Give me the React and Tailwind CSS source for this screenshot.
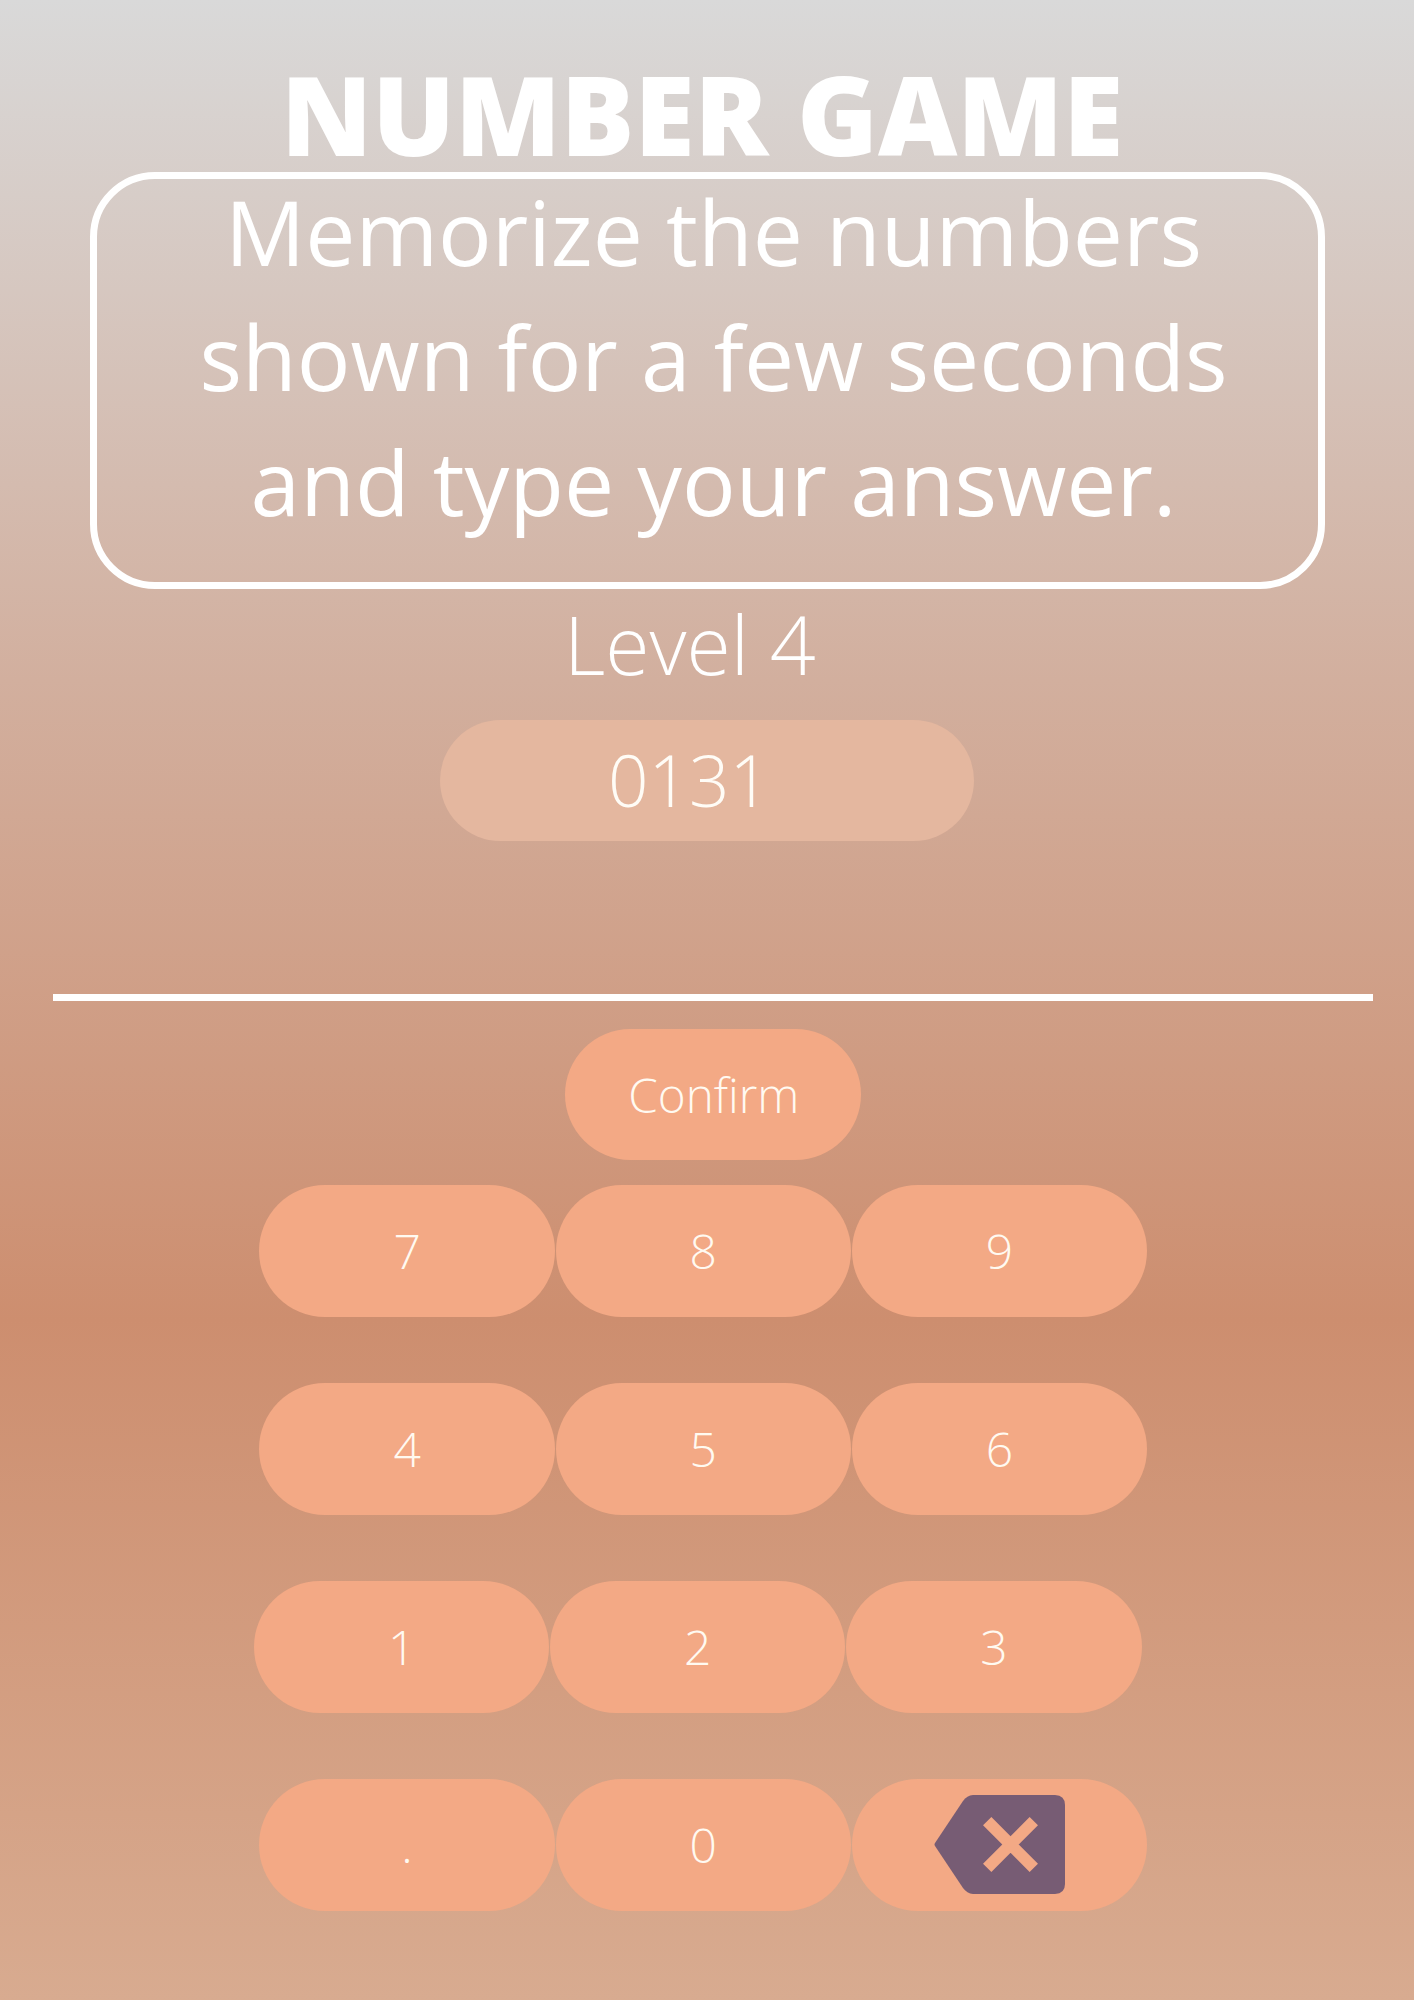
const keys = [['7','8','9'],['4','5','6'],['1','2','3'],['.','0','del']];

function Backspace() {
  return (
    <svg width="131" height="99" viewBox="0 0 131 99" className="block">
      <path d="M39 0H121Q131 0.500 131 10V89Q131 98.500 121 99H39Q33 98.500 29 93L1 51Q0 49.500 1 48L29 6Q33 0.500 39 0Z" fill="#775c74" />
      <path d="M53.200 26.200L99.800 72.800M99.800 26.200L53.200 72.800" stroke="#f3a985" strokeWidth="11.800" />
    </svg>
  );
}

export default function App() {
  return (
    <main className="flex h-[2000px] w-[1414px] flex-col overflow-hidden bg-[linear-gradient(180deg,#d9d9d9_0%,#d2af9e_34%,#cd8e6f_66%,#d8ab90_100%)] font-['Open_Sans',sans-serif] text-white">
      <h1 className="mt-[62px] ml-[281px] h-[110px] text-[109.4px] leading-[104px] font-extrabold whitespace-nowrap">NUMBER GAME</h1>
      <section className="ml-[90px] h-[417px] w-[1235px] rounded-[65px] border-[7px] border-white pl-[12px] text-center text-[89.3px] leading-[125px] whitespace-nowrap">
        <div className="-mt-[10px]">
          <p>Memorize the numbers</p>
          <p>shown for a few seconds</p>
          <p>and type your answer.</p>
        </div>
      </section>
      <h2 className="-mt-px ml-[564px] h-[132px] text-[80.5px] leading-[112px] font-light whitespace-nowrap">Level 4</h2>
      <div className="ml-[440px] h-[121px] w-[534px] rounded-full bg-[#e4b79f] pr-[36px] text-center text-[71px] leading-[119px] font-light text-[#fffcf6]">0131</div>
      <div className="mt-[153px] ml-[53px] h-[6.5px] w-[1320px] bg-white" />
      <button className="mt-[28.2px] ml-[565px] flex h-[131.4px] w-[295.6px] items-center justify-center rounded-full bg-[#f3a985] pl-[2px] text-[47.6px] font-light text-[#fffaf1]">Confirm</button>
      <div className="mt-[25.2px] ml-[259.4px] flex flex-col gap-[66.6px]">
        {keys.map((row, i) => (
          <div key={i} className={i === 2 ? '-ml-[5.5px] flex gap-[0.8px]' : 'flex gap-[0.8px]'}>
            {row.map((k) => (
              <button key={k} className="flex h-[131.4px] w-[295.4px] items-center justify-center rounded-full bg-[#f3a985] text-[48px] font-light text-[#fffaf1]">
                {k === 'del' ? <Backspace /> : k}
              </button>
            ))}
          </div>
        ))}
      </div>
    </main>
  );
}
